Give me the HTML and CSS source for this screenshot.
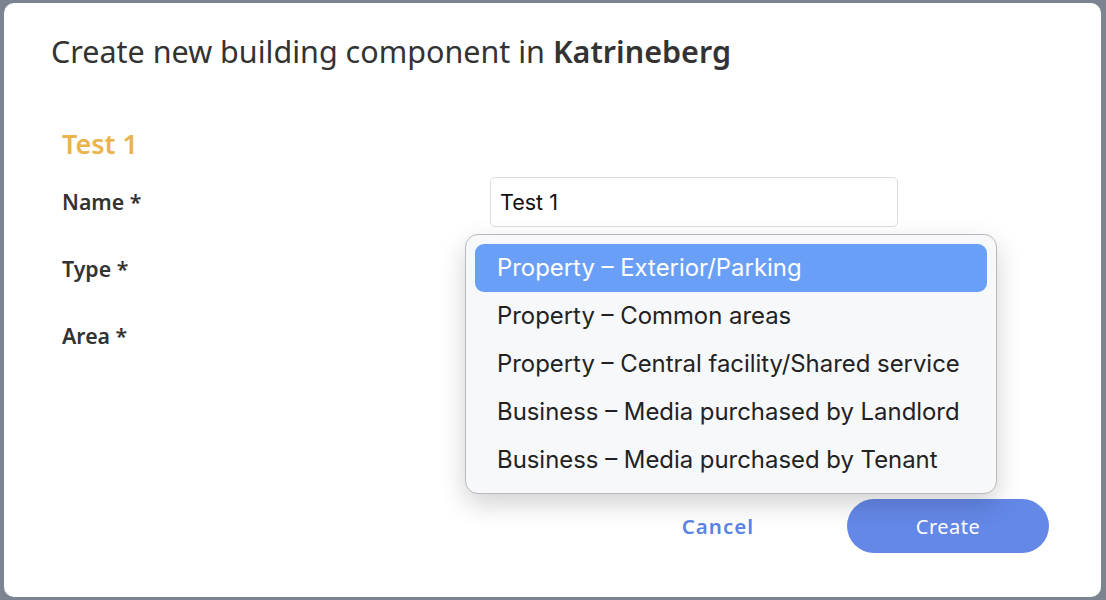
FILE: index.html
```html
<!DOCTYPE html>
<html lang="en">
<head>
  <meta charset="UTF-8" />
  <meta name="viewport" content="width=device-width, initial-scale=1.0"/>
  <title>Create building component</title>
  <link rel="stylesheet" href="styles.css">
</head>
<body>
  <div class="modal">
    <h1 class="modal-title">Create new building component in <strong>Katrineberg</strong></h1>

    <form class="component-form">
      <h2 class="group-title">Test 1</h2>

      <div class="field-row">
        <label class="field-label" for="name">Name *</label>
        <input class="text-input" id="name" type="text" value="Test 1" />
      </div>
      <div class="field-row">
        <label class="field-label">Type *</label>
        <div class="field-control"></div>
      </div>
      <div class="field-row">
        <label class="field-label">Area *</label>
        <div class="field-control"></div>
      </div>

      <!-- open popup of the type select -->
      <ul class="select-menu">
        <li class="select-option selected">Property – Exterior/Parking</li>
        <li class="select-option">Property – Common areas</li>
        <li class="select-option">Property – Central facility/Shared service</li>
        <li class="select-option">Business – Media purchased by Landlord</li>
        <li class="select-option">Business – Media purchased by Tenant</li>
      </ul>

      <div class="form-actions">
        <button type="button" class="btn-cancel">Cancel</button>
        <button type="submit" class="btn-create">Create</button>
      </div>
    </form>
  </div>
</body>
</html>
```

FILE: styles.css
```css
body {
  margin: 0;
  padding: 3px 5px 3px 4px;
  background-color: #7c8492;
  font-family: "Noto Sans", "Open Sans", sans-serif;
  color: #333;
}
.modal {
  height: 594px;
  box-sizing: border-box;
  background-color: #fff;
  border-radius: 10px;
  padding: 28px 52px 0 47px;
  overflow: hidden;
}
.modal-title {
  margin: 0;
  font-size: 30.5px;
  font-weight: 400;
  line-height: 40px;
  color: #333;
}
.modal-title strong {
  font-weight: 600;
}
.component-form {
  position: relative;
  padding-left: 11px;
  margin-top: 55px;
}
.group-title {
  margin: 0 0 6px;
  font-size: 27px;
  font-weight: 600;
  line-height: 36px;
  color: #ebb44b;
}
.field-row {
  display: grid;
  grid-template-columns: 428px 408px;
  align-items: center;
  height: 67px;
}
.field-label {
  font-size: 21.3px;
  font-weight: 600;
  color: #333;
}
.text-input {
  height: 50px;
  box-sizing: border-box;
  border: 1px solid #dcdcdc;
  border-radius: 5px;
  padding: 0 9px;
  font-family: Inter, "Liberation Sans", sans-serif;
  font-size: 21.5px;
  color: #111;
}
.select-menu {
  position: absolute;
  left: 414px;
  top: 108px;
  width: 532px;
  height: 260px;
  box-sizing: border-box;
  margin: 0;
  padding: 9px 9px;
  list-style: none;
  background-color: #f7f8fa;
  border: 1px solid #b9b9bb;
  border-radius: 13px;
  box-shadow: 0 10px 26px rgba(0, 0, 0, 0.18);
  font-family: Inter, "Liberation Sans", sans-serif;
  font-size: 23.9px;
  color: #222;
}
.select-option {
  height: 48px;
  line-height: 48px;
  padding: 0 22px;
  border-radius: 9px;
}
.select-option.selected {
  background-color: #6a9ff7;
  color: #fff;
}
.form-actions {
  display: flex;
  justify-content: flex-end;
  align-items: center;
  gap: 93px;
  margin-top: 130px;
}
.btn-cancel {
  border: none;
  background: none;
  padding: 0;
  font-family: inherit;
  font-size: 20.5px;
  font-weight: 600;
  letter-spacing: 1px;
  color: #5a83e3;
}
.btn-create {
  width: 202px;
  height: 54px;
  border: none;
  border-radius: 27px;
  background-color: #6488e8;
  font-family: inherit;
  font-size: 20px;
  letter-spacing: 0.5px;
  color: #fff;
}
```
